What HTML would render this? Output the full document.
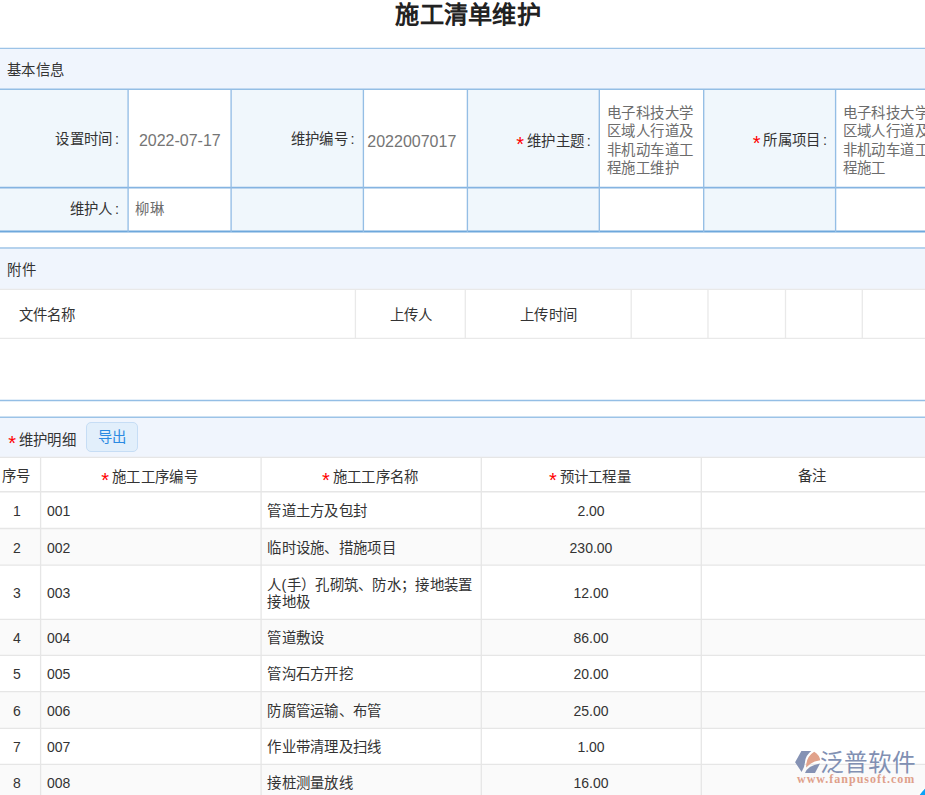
<!DOCTYPE html>
<html lang="zh-CN">
<head>
<meta charset="utf-8">
<title>施工清单维护</title>
<style>
html,body{margin:0;padding:0;}
body{width:925px;height:795px;overflow:hidden;background:#fff;position:relative;
 font-family:"Liberation Sans",sans-serif;font-size:14px;color:#333;}
.ln{position:absolute;}
.lines{position:absolute;left:0;top:0;}
.t{position:absolute;white-space:nowrap;font-size:14px;}
.cj{font-size:14.4px;letter-spacing:0.3px;}
.dk{color:#333;}
.val{color:#6c6c6c;}
.val16{color:#757575;font-size:16px;}
.ta{white-space:normal;line-height:18.5px;word-break:break-all;}
.title{letter-spacing:0.3px;font-size:24.2px;font-weight:bold;color:#222;}
.star{color:#f00;font-size:20px;line-height:0;position:relative;top:5px;display:inline-block;width:8px;margin-right:-1.6px;}
.cl{margin-left:2.5px;}
.wm1{font-size:23.6px;font-weight:500;color:#8190b3;letter-spacing:0;}
.wm2{font-family:"Liberation Serif",serif;font-weight:bold;font-size:12px;color:#dfa08a;letter-spacing:1px;}
.btn{font-size:14.4px;position:absolute;box-sizing:border-box;border:1px solid #c6ddf5;background:#e2effb;border-radius:5px;color:#2b8ae2;text-align:center;}
</style>
</head>
<body>
<div class="ln" style="left:0px;top:49px;width:925px;height:40px;background:#f0f5fd"></div>
<div class="ln" style="left:0px;top:90px;width:128px;height:141px;background:#f0f7fc"></div>
<div class="ln" style="left:231px;top:90px;width:133px;height:141px;background:#f0f7fc"></div>
<div class="ln" style="left:467px;top:90px;width:132px;height:141px;background:#f0f7fc"></div>
<div class="ln" style="left:704px;top:90px;width:132px;height:141px;background:#f0f7fc"></div>
<div class="ln" style="left:0px;top:249px;width:925px;height:40px;background:#f0f5fd"></div>
<div class="ln" style="left:0px;top:418px;width:925px;height:40px;background:#f0f5fd"></div>
<div class="ln" style="left:0px;top:528px;width:925px;height:37px;background:#fafafa"></div>
<div class="ln" style="left:0px;top:619px;width:925px;height:36px;background:#fafafa"></div>
<div class="ln" style="left:0px;top:692px;width:925px;height:36px;background:#fafafa"></div>
<div class="ln" style="left:0px;top:764px;width:925px;height:37px;background:#fafafa"></div>
<svg class="lines" width="925" height="795" viewBox="0 0 925 795">
<line x1="0" y1="48.4" x2="925" y2="48.4" stroke="#9cc3e7" stroke-width="1.3"/>
<line x1="0" y1="89.3" x2="925" y2="89.3" stroke="#94bee5" stroke-width="1.4"/>
<line x1="0" y1="187.6" x2="925" y2="187.6" stroke="#85b4e1" stroke-width="1.9"/>
<line x1="0" y1="231.5" x2="925" y2="231.5" stroke="#6ea8dc" stroke-width="2"/>
<line x1="128.1" y1="89" x2="128.1" y2="232" stroke="#94bee5" stroke-width="1.35"/>
<line x1="231.1" y1="89" x2="231.1" y2="232" stroke="#94bee5" stroke-width="1.35"/>
<line x1="363.4" y1="89" x2="363.4" y2="232" stroke="#94bee5" stroke-width="1.35"/>
<line x1="467.4" y1="89" x2="467.4" y2="232" stroke="#94bee5" stroke-width="1.35"/>
<line x1="599.3" y1="89" x2="599.3" y2="232" stroke="#94bee5" stroke-width="1.35"/>
<line x1="703.7" y1="89" x2="703.7" y2="232" stroke="#94bee5" stroke-width="1.35"/>
<line x1="835.6" y1="89" x2="835.6" y2="232" stroke="#94bee5" stroke-width="1.35"/>
<line x1="0" y1="248.1" x2="925" y2="248.1" stroke="#9cc3e7" stroke-width="1.5"/>
<line x1="0" y1="289.3" x2="925" y2="289.3" stroke="#e9e9e9" stroke-width="1.3"/>
<line x1="0" y1="338.3" x2="925" y2="338.3" stroke="#e9e9e9" stroke-width="1.3"/>
<line x1="355.4" y1="289" x2="355.4" y2="338.5" stroke="#e9e9e9" stroke-width="1.3"/>
<line x1="465.3" y1="289" x2="465.3" y2="338.5" stroke="#e9e9e9" stroke-width="1.3"/>
<line x1="631.2" y1="289" x2="631.2" y2="338.5" stroke="#e9e9e9" stroke-width="1.3"/>
<line x1="708" y1="289" x2="708" y2="338.5" stroke="#e9e9e9" stroke-width="1.3"/>
<line x1="785.5" y1="289" x2="785.5" y2="338.5" stroke="#e9e9e9" stroke-width="1.3"/>
<line x1="862.3" y1="289" x2="862.3" y2="338.5" stroke="#e9e9e9" stroke-width="1.3"/>
<line x1="0" y1="400.5" x2="925" y2="400.5" stroke="#94bee5" stroke-width="1.3"/>
<line x1="0" y1="417.2" x2="925" y2="417.2" stroke="#9cc3e7" stroke-width="1.4"/>
<line x1="0" y1="457.3" x2="925" y2="457.3" stroke="#e6e6e6" stroke-width="1.3"/>
<line x1="0" y1="491.75" x2="925" y2="491.75" stroke="#e6e6e6" stroke-width="1.3"/>
<line x1="0" y1="528.5" x2="925" y2="528.5" stroke="#e6e6e6" stroke-width="1.3"/>
<line x1="0" y1="565.05" x2="925" y2="565.05" stroke="#e6e6e6" stroke-width="1.3"/>
<line x1="0" y1="619.4" x2="925" y2="619.4" stroke="#e6e6e6" stroke-width="1.3"/>
<line x1="0" y1="655.3" x2="925" y2="655.3" stroke="#e6e6e6" stroke-width="1.3"/>
<line x1="0" y1="691.6" x2="925" y2="691.6" stroke="#e6e6e6" stroke-width="1.3"/>
<line x1="0" y1="728.3" x2="925" y2="728.3" stroke="#e6e6e6" stroke-width="1.3"/>
<line x1="0" y1="764.3" x2="925" y2="764.3" stroke="#e6e6e6" stroke-width="1.3"/>
<line x1="40.6" y1="457.5" x2="40.6" y2="797.5" stroke="#e6e6e6" stroke-width="1.3"/>
<line x1="261.1" y1="457.5" x2="261.1" y2="797.5" stroke="#e6e6e6" stroke-width="1.3"/>
<line x1="481.3" y1="457.5" x2="481.3" y2="797.5" stroke="#e6e6e6" stroke-width="1.3"/>
<line x1="701.3" y1="457.5" x2="701.3" y2="797.5" stroke="#e6e6e6" stroke-width="1.3"/>
</svg>
<div class="t title" style="left:268.2px;width:400px;text-align:center;top:0.3px;line-height:30px;">施工清单维护</div>
<div class="t dk cj" style="left:7.2px;top:61.1px;line-height:18px;">基本信息</div>
<div class="t dk cj" style="left:-180.6px;width:300px;text-align:right;top:130.0px;line-height:18px;">设置时间<span class="cl">:</span></div>
<div class="t val16" style="left:138.9px;top:131.9px;line-height:18px;">2022-07-17</div>
<div class="t dk cj" style="left:54.69999999999999px;width:300px;text-align:right;top:129.6px;line-height:18px;">维护编号<span class="cl">:</span></div>
<div class="t val16" style="left:367.3px;top:133.1px;line-height:18px;">2022007017</div>
<div class="t dk cj" style="left:291px;width:300px;text-align:right;top:131.8px;line-height:18px;"><span class="star">*</span> 维护主题<span class="cl">:</span></div>
<div class="t val ta cj" style="left:607px;top:103.7px;width:92px;letter-spacing:0.4px;">电子科技大学区域人行道及非机动车道工程施工维护</div>
<div class="t dk cj" style="left:527.4px;width:300px;text-align:right;top:131.4px;line-height:18px;"><span class="star">*</span> 所属项目<span class="cl">:</span></div>
<div class="t val ta cj" style="left:842.6px;top:103.7px;width:92px;letter-spacing:0.4px;">电子科技大学区域人行道及非机动车道工程施工</div>
<div class="t dk cj" style="left:-180.7px;width:300px;text-align:right;top:199.9px;line-height:18px;">维护人<span class="cl">:</span></div>
<div class="t val cj" style="left:135.3px;top:199.9px;line-height:18px;">柳琳</div>
<div class="t dk cj" style="left:7.3px;top:260.5px;line-height:18px;">附件</div>
<div class="t dk cj" style="left:18.6px;top:305.8px;line-height:18px;">文件名称</div>
<div class="t dk cj" style="left:261.2px;width:300px;text-align:center;top:306.2px;line-height:18px;">上传人</div>
<div class="t dk cj" style="left:398.70000000000005px;width:300px;text-align:center;top:306.2px;line-height:18px;">上传时间</div>
<div class="t dk cj" style="left:8.2px;top:430.7px;line-height:18px;"><span class="star">*</span> 维护明细</div>
<div class="btn" style="left:86px;top:422px;width:52px;height:30px;line-height:29px;">导出</div>
<div class="t dk cj" style="left:-13.7px;width:60px;text-align:center;top:467.3px;line-height:18px;">序号</div>
<div class="t dk cj" style="left:-0.4000000000000057px;width:300px;text-align:center;top:468.3px;line-height:18px;"><span class="star">*</span> 施工工序编号</div>
<div class="t dk cj" style="left:220.2px;width:300px;text-align:center;top:468.3px;line-height:18px;"><span class="star">*</span> 施工工序名称</div>
<div class="t dk cj" style="left:440.0px;width:300px;text-align:center;top:468.3px;line-height:18px;"><span class="star">*</span> 预计工程量</div>
<div class="t dk cj" style="left:662.5px;width:300px;text-align:center;top:467.3px;line-height:18px;">备注</div>
<div class="t dk" style="left:-3.0px;width:40px;text-align:center;top:502.12px;line-height:18px;">1</div>
<div class="t dk" style="left:47px;top:502.12px;line-height:18px;">001</div>
<div class="t dk cj" style="left:267.3px;top:502.03px;line-height:18px;">管道土方及包封</div>
<div class="t dk" style="left:441.0px;width:300px;text-align:center;top:502.12px;line-height:18px;">2.00</div>
<div class="t dk" style="left:-3.0px;width:40px;text-align:center;top:538.77px;line-height:18px;">2</div>
<div class="t dk" style="left:47px;top:538.77px;line-height:18px;">002</div>
<div class="t dk cj" style="left:267.3px;top:538.67px;line-height:18px;">临时设施、措施项目</div>
<div class="t dk" style="left:441.0px;width:300px;text-align:center;top:538.77px;line-height:18px;">230.00</div>
<div class="t dk" style="left:-3.0px;width:40px;text-align:center;top:584.22px;line-height:18px;">3</div>
<div class="t dk" style="left:47px;top:584.22px;line-height:18px;">003</div>
<div class="t dk cj" style="left:267.3px;top:576.6249999999999px;width:214px;line-height:17.6px;white-space:normal;">人(手）孔砌筑、防水；接地装置<br>接地极</div>
<div class="t dk" style="left:441.0px;width:300px;text-align:center;top:584.22px;line-height:18px;">12.00</div>
<div class="t dk" style="left:-3.0px;width:40px;text-align:center;top:629.35px;line-height:18px;">4</div>
<div class="t dk" style="left:47px;top:629.35px;line-height:18px;">004</div>
<div class="t dk cj" style="left:267.3px;top:629.25px;line-height:18px;">管道敷设</div>
<div class="t dk" style="left:441.0px;width:300px;text-align:center;top:629.35px;line-height:18px;">86.00</div>
<div class="t dk" style="left:-3.0px;width:40px;text-align:center;top:665.45px;line-height:18px;">5</div>
<div class="t dk" style="left:47px;top:665.45px;line-height:18px;">005</div>
<div class="t dk cj" style="left:267.3px;top:665.35px;line-height:18px;">管沟石方开挖</div>
<div class="t dk" style="left:441.0px;width:300px;text-align:center;top:665.45px;line-height:18px;">20.00</div>
<div class="t dk" style="left:-3.0px;width:40px;text-align:center;top:701.95px;line-height:18px;">6</div>
<div class="t dk" style="left:47px;top:701.95px;line-height:18px;">006</div>
<div class="t dk cj" style="left:267.3px;top:701.85px;line-height:18px;">防腐管运输、布管</div>
<div class="t dk" style="left:441.0px;width:300px;text-align:center;top:701.95px;line-height:18px;">25.00</div>
<div class="t dk" style="left:-3.0px;width:40px;text-align:center;top:738.3px;line-height:18px;">7</div>
<div class="t dk" style="left:47px;top:738.3px;line-height:18px;">007</div>
<div class="t dk cj" style="left:267.3px;top:738.2px;line-height:18px;">作业带清理及扫线</div>
<div class="t dk" style="left:441.0px;width:300px;text-align:center;top:738.3px;line-height:18px;">1.00</div>
<div class="t dk" style="left:-3.0px;width:40px;text-align:center;top:774.45px;line-height:18px;">8</div>
<div class="t dk" style="left:47px;top:774.45px;line-height:18px;">008</div>
<div class="t dk cj" style="left:267.3px;top:774.35px;line-height:18px;">接桩测量放线</div>
<div class="t dk" style="left:441.0px;width:300px;text-align:center;top:774.45px;line-height:18px;">16.00</div>
<svg class="logo" style="position:absolute;left:790px;top:742px;" width="135" height="53" viewBox="790 742 135 53">
<path d="M795.1 762.3 L801.4 751.1 L811.3 751.1 Q805.6 755.5 805 762 Q804.8 766.5 801.6 771.9 Z" fill="#8592b4"/>
<path d="M814.2 751.7 Q819.6 755 820.2 760.3 Q811.5 761.2 806.2 767.6 Q805.6 757 814.2 751.7 Z" fill="#e1a28b"/>
<path d="M820 763.4 L815 773.1 L805 773.1 Q807.5 765.5 820 763.4 Z" fill="#8592b4"/>
<circle cx="945" cy="811.2" r="31" fill="#0aa2f8" stroke="#fdfcf8" stroke-width="2"/>
</svg>
<div class="t wm1" style="left:820.2px;top:748.1px;line-height:30px;">泛普软件</div>
<div class="t wm2" style="left:797px;top:771px;line-height:16px;">www.fanpusoft.com</div>
</body>
</html>
